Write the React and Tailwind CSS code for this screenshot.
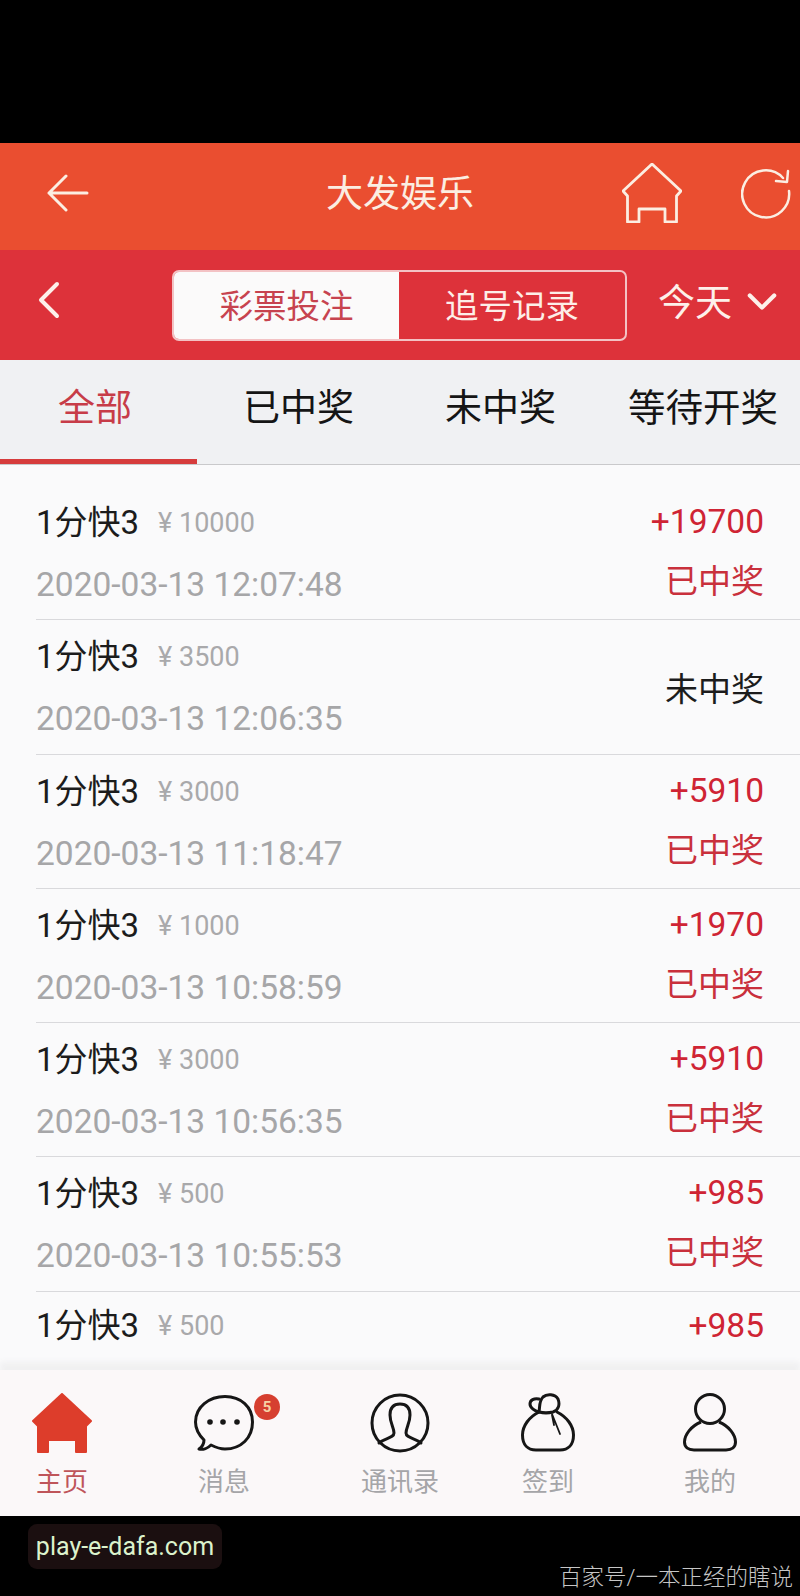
import React from "react";

const rows = [
  ["¥ 10000", "2020-03-13 12:07:48", "+19700", "已中奖"],
  ["¥ 3500", "2020-03-13 12:06:35", null, "未中奖"],
  ["¥ 3000", "2020-03-13 11:18:47", "+5910", "已中奖"],
  ["¥ 1000", "2020-03-13 10:58:59", "+1970", "已中奖"],
  ["¥ 3000", "2020-03-13 10:56:35", "+5910", "已中奖"],
  ["¥ 500", "2020-03-13 10:55:53", "+985", "已中奖"],
  ["¥ 500", "", "+985", "已中奖"],
];

const housePath = "M30 1 L59 28 L54.500 33 L54.500 59 L43 59 L43 46 L17 46 L17 59 L5.500 59 L5.500 33 L1 28 Z";

function Row({ stake, time, amount, status, last }) {
  return (
    <div className="ml-[36px] pr-[36px] h-[134.3px] shrink-0 flex justify-between border-b border-[#d9d9dc]">
      <div className="flex flex-col">
        <div className={`flex items-center h-[40px] ${last ? "mt-[14px]" : "mt-[17px]"}`}>
          <span className="text-[33px] leading-[40px] text-[#1c1c1c]">1分快3</span>
          <span className="text-[27px] leading-[40px] text-[#a9a9ab] ml-[19px]">{stake}</span>
        </div>
        <div className="text-[33.5px] leading-[40px] text-[#a6a6a8] mt-[22px]">{time}</div>
      </div>
      {amount ? (
        <div className="flex flex-col items-end">
          <div className={`text-[33.500px] leading-[40px] text-[#cf2434] ${last ? "mt-[14px]" : "mt-[16px]"}`}>{amount}</div>
          <div className="text-[33px] leading-[40px] text-[#c9303c] mt-[20px]">{status}</div>
        </div>
      ) : (
        <div className="flex items-center pt-[5px] text-[33px] text-[#1c1c1c]">{status}</div>
      )}
    </div>
  );
}

function NavItem({ label, active, children }) {
  return (
    <div className="flex flex-col items-center">
      <div className="relative h-[59px] flex items-center">{children}</div>
      <span className={`text-[26px] leading-[30px] mt-[15px] ${active ? "text-[#bf555a]" : "text-[#a5a5a8]"}`}>{label}</span>
    </div>
  );
}

export default function App() {
  return (
    <div className="w-[800px] h-[1596px] bg-black flex flex-col overflow-hidden font-['Roboto','Noto_Sans_CJK_SC',sans-serif]">
      <div className="h-[143px] shrink-0" />

      <header className="h-[107px] shrink-0 bg-[#ea4e30] grid grid-cols-[1fr_auto_1fr] items-center pb-[8px] text-[#fbeee2]">
        <div className="pl-[47px] flex">
          <svg width="42" height="38" viewBox="0 0 42 38" fill="none" stroke="#fbeee2" strokeWidth="3" strokeLinecap="round" strokeLinejoin="round">
            <path d="M40 19 H2 M19 2 L2 19 L19 36" />
          </svg>
        </div>
        <div className="text-[37px] leading-[44px] mt-[4px]">大发娱乐</div>
        <div className="flex justify-end items-center pr-[9px] gap-[59px]">
          <svg width="60" height="60" viewBox="0 0 60 60" fill="none" stroke="#fbeee2" strokeWidth="2.800" strokeLinejoin="round" className="mt-[1px]">
            <path d={housePath} />
          </svg>
          <svg width="50" height="50" viewBox="0 0 50 50" fill="none" stroke="#fbeee2" strokeWidth="2.500" strokeLinecap="round" strokeLinejoin="round" className="mt-[3px]">
            <path d="M48 22 A23.500 23.500 0 1 1 42 9" />
            <path d="M47 2 L46 13 L35 12" />
          </svg>
        </div>
      </header>

      <div className="h-[110px] shrink-0 bg-[#dd323a] grid grid-cols-[172px_455px_1fr] items-center text-[#fdf0ea]">
        <div className="pl-[38px] pb-[10px]">
          <svg width="22" height="38" viewBox="0 0 22 38" fill="none" stroke="#fdf0ea" strokeWidth="4" strokeLinecap="round" strokeLinejoin="round">
            <path d="M19 3 L3 19 L19 35" />
          </svg>
        </div>
        <div className="h-[71px] rounded-[7px] border-2 border-[#f3c2c4] flex overflow-hidden text-[33.500px]">
          <div className="w-[225px] bg-[#fbfafa] text-[#c7434f] flex items-center justify-center pt-[5px]">彩票投注</div>
          <div className="flex-1 text-[#fdeee8] flex items-center justify-center pt-[5px]">追号记录</div>
        </div>
        <div className="flex items-center pl-[31px] pb-[2px]">
          <span className="text-[37px] leading-[44px]">今天</span>
          <svg width="30" height="20" viewBox="0 0 32 20" fill="none" stroke="#fdf0ea" strokeWidth="4.500" strokeLinecap="round" strokeLinejoin="round" className="ml-[15px] mb-[4px]">
            <path d="M3 3 L16 16 L29 3" />
          </svg>
        </div>
      </div>

      <nav className="relative h-[105px] shrink-0 bg-[#f0f1f3] border-b border-[#c9c9cb] flex items-center pb-[7px] pl-[58px] text-[37px] text-[#151515]">
        <span className="text-[#c73c48]">全部</span>
        <span className="ml-[111px]">已中奖</span>
        <span className="ml-[91px]">未中奖</span>
        <span className="ml-[72px] text-[37.500px]">等待开奖</span>
        <div className="absolute left-0 bottom-0 w-[197px] h-[5px] bg-[#d63c3c]" />
      </nav>

      <main className="flex-1 min-h-0 overflow-hidden bg-[#fafafb] pt-[21px] flex flex-col">
        {rows.map((r, i) => (
          <Row key={i} stake={r[0]} time={r[1]} amount={r[2]} status={r[3]} last={i === rows.length - 1} />
        ))}
      </main>

      <div className="relative z-10 h-[146px] shrink-0 bg-[#fbf8f9] shadow-[0_-8px_6px_#f0f0f1] grid grid-cols-[124px_200px_152px_144px_180px] pt-[23px]">
        <NavItem label="主页" active>
          <svg width="60" height="60" viewBox="0 0 60 60" fill="#dd3d2b" stroke="#dd3d2b" strokeWidth="2" strokeLinejoin="round">
            <path d="M30 1 L59 28 L54 33 L54 59 L44 59 L44 47 L16 47 L16 59 L6 59 L6 33 L1 28 Z" />
          </svg>
        </NavItem>
        <NavItem label="消息">
          <svg width="60" height="56" viewBox="0 0 60 56" fill="none" stroke="#161616" strokeWidth="3" strokeLinejoin="round">
            <path d="M10 45 C4 39 1.500 33 1.500 27 C1.500 12 15 1.500 31 1.500 C47 1.500 58.500 12 58.500 27 C58.500 43 47 54 31 54 C25 54 21 52 17 50 C14 53 9 55 5 54 C8 52 10 49 10 45 Z" />
            <circle cx="16" cy="27" r="2.800" fill="#161616" stroke="none" />
            <circle cx="29" cy="27" r="2.800" fill="#161616" stroke="none" />
            <circle cx="43" cy="27" r="2.800" fill="#161616" stroke="none" />
          </svg>
          <span className="absolute left-[60px] top-[1px] w-[26px] h-[26px] rounded-full bg-[#d63f30] text-[#f6d3a6] text-[15px] font-bold flex items-center justify-center">5</span>
        </NavItem>
        <NavItem label="通讯录">
          <svg width="60" height="60" viewBox="0 0 60 60" fill="none" stroke="#161616" strokeWidth="3" strokeLinejoin="round" strokeLinecap="round">
            <circle cx="30" cy="30" r="28" />
            <path d="M9 50 C15 45 24 45 24 40 C24 35 20 30 20 22 C20 14 24 11 30 11 C36 11 40 14 40 22 C40 30 36 35 36 40 C36 45 45 45 51 50" />
          </svg>
        </NavItem>
        <NavItem label="签到">
          <svg width="54" height="59" viewBox="0 0 54 59" fill="none" stroke="#161616" strokeWidth="3" strokeLinejoin="round" strokeLinecap="round">
            <path d="M18 19 C8 24 1.500 33 1.500 42 C1.500 52 7 57 15 57 H39 C47 57 52.500 52 52.500 42 C52.500 33 46 24 36 19" />
            <path d="M18 19 C14 18 9 15 9 11 C9 7 13 5 18 6" />
            <path d="M18 19 C19 13 18 8 22 4 C26 0.500 34 1 37 6 C39 11 38 17 32 19 C28 20 22 20 18 19 Z" />
            <path d="M31 21 L39 41 M31 22 L33 32" strokeWidth="1.800" />
          </svg>
        </NavItem>
        <NavItem label="我的">
          <svg width="54" height="59" viewBox="0 0 54 59" fill="none" stroke="#161616" strokeWidth="3" strokeLinejoin="round">
            <circle cx="27" cy="16" r="14.500" />
            <path d="M18 29 C8 33 1.500 42 1.500 49 C1.500 54 5 57 11 57 H43 C49 57 52.500 54 52.500 49 C52.500 42 46 33 36 29" />
          </svg>
        </NavItem>
      </div>

      <footer className="h-[80px] shrink-0 flex justify-between">
        <div className="ml-[28px] mt-[8px] h-[45px] w-[194px] rounded-[9px] bg-[#1b0f10] flex items-center justify-center text-[25px] text-[#dcf2cc]">play-e-dafa.com</div>
        <div className="self-end mb-[7px] mr-[7px] text-[22.500px] leading-[24px] font-light text-[#c6c6c6]">百家号/一本正经的瞎说</div>
      </footer>
    </div>
  );
}
